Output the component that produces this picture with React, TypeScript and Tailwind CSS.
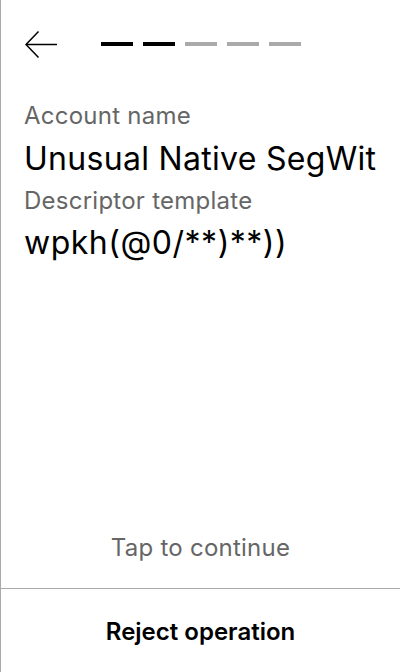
export default function App() {
  const steps = [true, true, false, false, false];
  return (
    <div
      className="flex h-[672px] w-[400px] flex-col border-l border-[#aaaaaa] bg-white text-black"
      style={{ fontFamily: "Inter, 'Noto Sans', sans-serif" }}
    >
      <div className="flex h-[88px] items-center pl-[24px] pt-[2px]">
        <svg width="34" height="30" viewBox="0 0 34 30" fill="none" stroke="black" strokeWidth="1.5">
          <path d="M1 14.5 H32" />
          <path d="M13.5 1.5 L1 14.5 L13.5 27.5" />
        </svg>
        <div className="ml-[42px] flex gap-[10px] pb-[2px]">
          {steps.map((done, i) => (
            <div key={i} className={`h-[4px] w-[32px] ${done ? "bg-black" : "bg-[#aaaaaa]"}`} />
          ))}
        </div>
      </div>

      <div className="flex flex-col px-[23px] pt-[12px]">
        <div className="text-[24px] leading-[32px] tracking-[0.25px] text-[#666666]">Account name</div>
        <div className="mt-[7px] text-[32px] leading-[40px] tracking-[0.3px]">Unusual Native SegWit</div>
        <div className="mt-[6px] text-[24px] leading-[32px] tracking-[0.25px] text-[#666666]">Descriptor template</div>
        <div className="mt-[6px] text-[32px] leading-[40px] tracking-[0.5px]">wpkh(@0/**)**))</div>
      </div>

      <div className="flex-1" />

      <div className="pb-[24px] text-center text-[24px] leading-[32px] tracking-[0.25px] text-[#666666]">
        Tap to continue
      </div>
      <div className="flex h-[84px] items-center justify-center border-t border-[#aaaaaa] pt-[3px] text-[24px] leading-[32px] font-semibold">
        Reject operation
      </div>
    </div>
  );
}
